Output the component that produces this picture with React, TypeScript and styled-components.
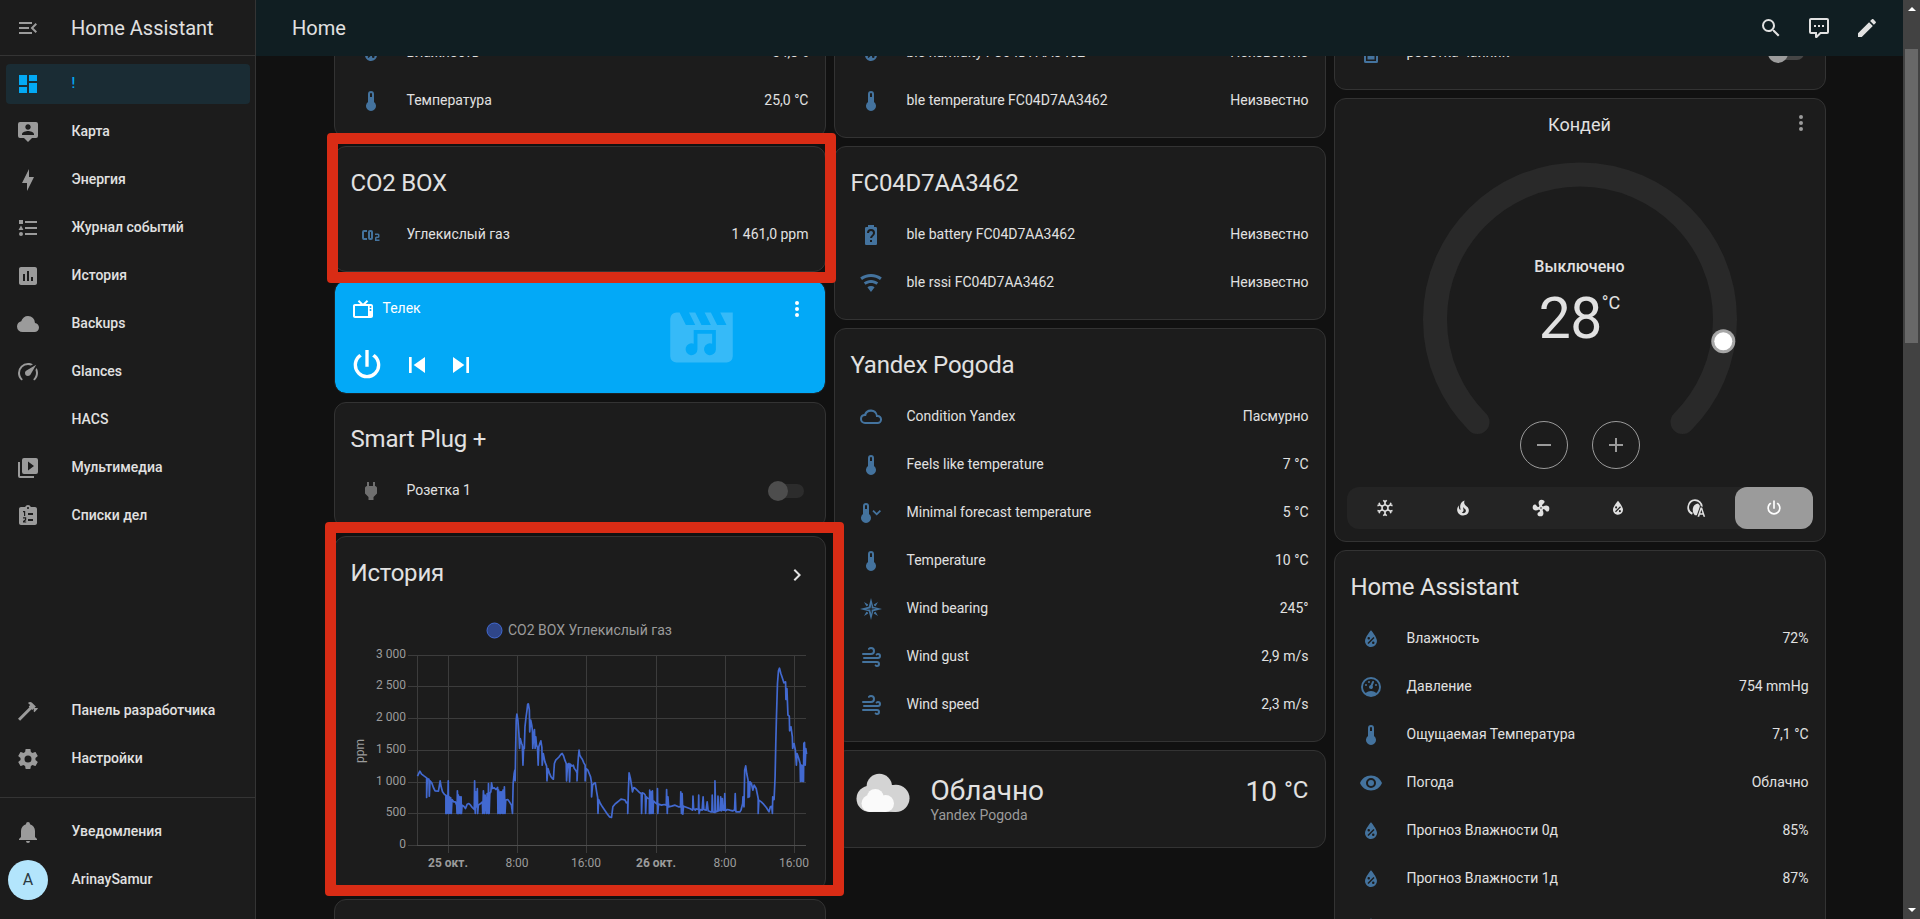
import React from "react";
import styled, { createGlobalStyle } from "styled-components";

const GlobalStyle = createGlobalStyle`
  * { box-sizing: border-box; }
  body {
    margin: 0;
    background: #111111;
    color: #e1e1e1;
    font-family: Roboto, "Noto Sans", sans-serif;
    font-size: 14px;
    line-height: 20px;
    overflow: hidden;
  }
`;

/* ---------- icons ---------- */

const icons = {
  menuOpen:
    "M21,15.61L19.59,17L14.58,12L19.59,7L21,8.39L17.44,12L21,15.61M3,6H16V8H3V6M3,13V11H13V13H3M3,18V16H16V18H3Z",
  dashboard: "M13,3V9H21V3M13,21H21V11H13M3,21H11V15H3M3,13H11V3H3V13Z",
  map: "M20,2H4A2,2 0 0,0 2,4V16A2,2 0 0,0 4,18H8L12,22L16,18H20A2,2 0 0,0 22,16V4A2,2 0 0,0 20,2M12,4.3C13.5,4.3 14.7,5.5 14.7,7C14.7,8.5 13.5,9.7 12,9.7C10.5,9.7 9.3,8.5 9.3,7C9.3,5.5 10.5,4.3 12,4.3M18,15H6V14.1C6,12.1 10,11 12,11C14,11 18,12.1 18,14.1V15Z",
  bolt: "M11 15H6L13 1V9H18L11 23V15Z",
  list: "M5,9.5L7.5,14H2.5L5,9.5M3,4H7V8H3V4M5,20A2,2 0 0,0 7,18A2,2 0 0,0 5,16A2,2 0 0,0 3,18A2,2 0 0,0 5,20M9,5V7H21V5H9M9,19H21V17H9V19M9,13H21V11H9V13Z",
  chartBox:
    "M9 17H7V10H9V17M13 17H11V7H13V17M17 17H15V13H17V17M19 3H5C3.9 3 3 3.9 3 5V19C3 20.1 3.9 21 5 21H19C20.1 21 21 20.1 21 19V5C21 3.9 20.1 3 19 3Z",
  cloud:
    "M6.5 20Q4.22 20 2.61 18.43 1 16.85 1 14.58 1 12.63 2.17 11.1 3.35 9.57 5.25 9.15 5.88 6.85 7.75 5.43 9.63 4 12 4 14.93 4 16.96 6.04 19 8.07 19 11 20.73 11.2 21.86 12.5 23 13.78 23 15.5 23 17.38 21.69 18.69 20.38 20 18.5 20Z",
  speedometer:
    "M12,16A3,3 0 0,1 9,13C9,11.88 9.61,10.9 10.5,10.39L20.21,4.77L14.68,14.35C14.18,15.33 13.17,16 12,16M12,3C13.81,3 15.5,3.5 16.97,4.32L14.87,5.53C14,5.19 13,5 12,5A8,8 0 0,0 4,13C4,15.21 4.89,17.21 6.34,18.65H6.35C6.74,19.04 6.74,19.67 6.35,20.06C5.96,20.45 5.32,20.45 4.93,20.07V20.07C3.12,18.26 2,15.76 2,13A10,10 0 0,1 12,3M22,13C22,15.76 20.88,18.26 19.07,20.07V20.07C18.68,20.45 18.05,20.45 17.66,20.06C17.27,19.67 17.27,19.04 17.66,18.65V18.65C19.11,17.2 20,15.21 20,13C20,12 19.81,11 19.46,10.1L20.67,8C21.5,9.5 22,11.18 22,13Z",
  media:
    "M4,6H2V20A2,2 0 0,0 4,22H18V20H4V6M20,2H8A2,2 0 0,0 6,4V16A2,2 0 0,0 8,18H20A2,2 0 0,0 22,16V4A2,2 0 0,0 20,2M12,14.5V5.5L18,10L12,14.5Z",
  clipboard:
    "M19 3H14.82C14.4 1.84 13.3 1 12 1S9.6 1.84 9.18 3H5C3.9 3 3 3.9 3 5V19C3 20.1 3.9 21 5 21H19C20.1 21 21 20.1 21 19V5C21 3.9 20.1 3 19 3M12 3C12.55 3 13 3.45 13 4S12.55 5 12 5 11 4.55 11 4 11.45 3 12 3M7 7H9.2V12H8V8.2H7ZM7 13.3H10.2V16L8.6 17.4H10.2V18.6H7V17.1L9 15.4V14.5H7ZM12 9H17V11H12ZM12 15H17V17H12Z",
  hammer:
    "M2 19.63L13.43 8.2L12.72 7.5L14.14 6.07L12 3.89C13.2 2.7 15.09 2.7 16.27 3.89L19.87 7.5L18.45 8.91H21.29L22 9.62L18.45 13.21L17.74 12.5V9.62L16.27 11.04L15.56 10.33L4.13 21.76L2 19.63Z",
  cog: "M12,15.5A3.5,3.5 0 0,1 8.5,12A3.5,3.5 0 0,1 12,8.5A3.5,3.5 0 0,1 15.5,12A3.5,3.5 0 0,1 12,15.5M19.43,12.97C19.47,12.65 19.5,12.33 19.5,12C19.5,11.67 19.47,11.34 19.43,11L21.54,9.37C21.73,9.22 21.78,8.95 21.66,8.73L19.66,5.27C19.54,5.05 19.27,4.96 19.05,5.05L16.56,6.05C16.04,5.66 15.5,5.32 14.87,5.07L14.5,2.42C14.46,2.18 14.25,2 14,2H10C9.75,2 9.54,2.18 9.5,2.42L9.13,5.07C8.5,5.32 7.96,5.66 7.44,6.05L4.95,5.05C4.73,4.96 4.46,5.05 4.34,5.27L2.34,8.73C2.21,8.95 2.27,9.22 2.46,9.37L4.57,11C4.53,11.34 4.5,11.67 4.5,12C4.5,12.33 4.53,12.65 4.57,12.97L2.46,14.63C2.27,14.78 2.21,15.05 2.34,15.27L4.34,18.73C4.46,18.95 4.73,19.03 4.95,18.95L7.44,17.94C7.96,18.34 8.5,18.68 9.13,18.93L9.5,21.58C9.54,21.82 9.75,22 10,22H14C14.25,22 14.46,21.82 14.5,21.58L14.87,18.93C15.5,18.67 16.04,18.34 16.56,17.94L19.05,18.95C19.27,19.03 19.54,18.95 19.66,18.73L21.66,15.27C21.78,15.05 21.73,14.78 21.54,14.63L19.43,12.97Z",
  bell: "M21,19V20H3V19L5,17V11C5,7.9 7.03,5.17 10,4.29C10,4.19 10,4.1 10,4A2,2 0 0,1 12,2A2,2 0 0,1 14,4C14,4.1 14,4.19 14,4.29C16.97,5.17 19,7.9 19,11V17L21,19M14,21A2,2 0 0,1 12,23A2,2 0 0,1 10,21",
  magnify:
    "M9.5,3A6.5,6.5 0 0,1 16,9.5C16,11.11 15.41,12.59 14.44,13.73L14.71,14H15.5L20.5,19L19,20.5L14,15.5V14.71L13.73,14.44C12.59,15.41 11.11,16 9.5,16A6.5,6.5 0 0,1 3,9.5A6.5,6.5 0 0,1 9.5,3M9.5,5C7,5 5,7 5,9.5C5,12 7,14 9.5,14C12,14 14,12 14,9.5C14,7 12,5 9.5,5Z",
  comment:
    "M9,22A1,1 0 0,1 8,21V18H4A2,2 0 0,1 2,16V4C2,2.89 2.9,2 4,2H20A2,2 0 0,1 22,4V16A2,2 0 0,1 20,18H13.9L10.2,21.71C10,21.9 9.75,22 9.5,22V22H9M10,16V19.08L13.08,16H20V4H4V16H10M17,11H15V9H17V11M13,11H11V9H13V11M9,11H7V9H9V11Z",
  pencil:
    "M20.71,7.04C21.1,6.65 21.1,6 20.71,5.63L18.37,3.29C18,2.9 17.35,2.9 16.96,3.29L15.12,5.12L18.87,8.87M3,17.25V21H6.75L17.81,9.93L14.06,6.18L3,17.25Z",
  thermometer:
    "M15 13V5A3 3 0 0 0 9 5V13A5 5 0 1 0 15 13M12 4A1 1 0 0 1 13 5V8H11V5A1 1 0 0 1 12 4Z",
  thermometerDown:
    "M10 13V5A3 3 0 0 0 4 5V13A5 5 0 1 0 10 13M7 4A1 1 0 0 1 8 5V8H6V5A1 1 0 0 1 7 4M14.6 9L13.4 10.3L17.7 14.4L22 10.3L20.8 9L17.7 11.9L14.6 9Z",
  humidity:
    "M12,3.25C12,3.25 6,10 6,14C6,17.32 8.69,20 12,20A6,6 0 0,0 18,14C18,10 12,3.25 12,3.25M14.47,9.97L15.53,11.03L9.53,17.03L8.47,15.97M9.75,10A1.25,1.25 0 0,1 11,11.25A1.25,1.25 0 0,1 9.75,12.5A1.25,1.25 0 0,1 8.5,11.25A1.25,1.25 0 0,1 9.75,10M14.25,14.5A1.25,1.25 0 0,1 15.5,15.75A1.25,1.25 0 0,1 14.25,17A1.25,1.25 0 0,1 13,15.75A1.25,1.25 0 0,1 14.25,14.5Z",
  co2: "M5,7A2,2 0 0,0 3,9V15A2,2 0 0,0 5,17H8V15H5V9H8V7H5M11 7A2 2 0 0 0 9 9V15A2 2 0 0 0 11 17H12A2 2 0 0 0 14 15V9A2 2 0 0 0 12 7H11M11,9H12V15H11V9M16,10.5V12H19V13.5H17.5A1.5,1.5 0 0 0 16,15V18H20.5V16.5H17.5V15H19A1.5,1.5 0 0 0 20.5,13.5V12A1.5,1.5 0 0 0 19,10.5H16Z",
  tv: "M8.16,3L6.75,4.41L9.34,7H4C2.89,7 2,7.89 2,9V19C2,20.11 2.89,21 4,21H20C21.11,21 22,20.11 22,19V9C22,7.89 21.11,7 20,7H14.66L17.25,4.41L15.84,3L12,6.84L8.16,3M4,9H17V19H4V9M19.5,9A1,1 0 0,1 20.5,10A1,1 0 0,1 19.5,11A1,1 0 0,1 18.5,10A1,1 0 0,1 19.5,9M19.5,12A1,1 0 0,1 20.5,13A1,1 0 0,1 19.5,14A1,1 0 0,1 18.5,13A1,1 0 0,1 19.5,12Z",
  power:
    "M16.56,5.44L15.11,6.89C16.84,7.94 18,9.83 18,12A6,6 0 0,1 12,18A6,6 0 0,1 6,12C6,9.83 7.16,7.94 8.88,6.88L7.44,5.44C5.36,6.88 4,9.28 4,12A8,8 0 0,0 12,20A8,8 0 0,0 20,12C20,9.28 18.64,6.88 16.56,5.44M13,3H11V13H13",
  skipPrevious: "M6,18V6H8V18H6M9.5,12L18,6V18L9.5,12Z",
  skipNext: "M16,18H18V6H16M6,18L14.5,12L6,6V18Z",
  dots: "M12,16A2,2 0 0,1 14,18A2,2 0 0,1 12,20A2,2 0 0,1 10,18A2,2 0 0,1 12,16M12,10A2,2 0 0,1 14,12A2,2 0 0,1 12,14A2,2 0 0,1 10,12A2,2 0 0,1 12,10M12,4A2,2 0 0,1 14,6A2,2 0 0,1 12,8A2,2 0 0,1 10,6A2,2 0 0,1 12,4Z",
  plug: "M16,7V3H14V7H10V3H8V7H8C7,7 6,8 6,9V14.5L9.5,18V21H14.5V18L18,14.5V9C18,8 17,7 16,7Z",
  chevron: "M8.59,16.58L13.17,12L8.59,7.41L10,6L16,12L10,18L8.59,16.58Z",
  battery:
    "M15.07,12.25L14.17,13.17C13.63,13.71 13.25,14.18 13.09,15H11.05C11.16,14.1 11.56,13.28 12.17,12.67L13.41,11.41C13.78,11.05 14,10.55 14,10C14,8.89 13.1,8 12,8A2,2 0 0,0 10,10H8A4,4 0 0,1 12,6A4,4 0 0,1 16,10C16,10.88 15.64,11.68 15.07,12.25M13,19H11V17H13M16.67,4H15V2H9V4H7.33A1.33,1.33 0 0,0 6,5.33V20.66C6,21.4 6.6,22 7.33,22H16.67C17.4,22 18,21.4 18,20.66V5.33C18,4.59 17.4,4 16.67,4Z",
  wifi: "M12,21L15.6,16.2C14.6,15.45 13.35,15 12,15C10.65,15 9.4,15.45 8.4,16.2L12,21M12,3C7.95,3 4.21,4.34 1.2,6.6L3,9C5.5,7.12 8.62,6 12,6C15.38,6 18.5,7.12 21,9L22.8,6.6C19.79,4.34 16.05,3 12,3M12,9C9.3,9 6.81,9.89 4.8,11.4L6.6,13.8C8.1,12.67 9.97,12 12,12C14.03,12 15.9,12.67 17.4,13.8L19.2,11.4C17.19,9.89 14.7,9 12,9Z",
  cloudOutline:
    "M6 19A5 5 0 0 1 1 14A5 5 0 0 1 5.2 9.1A7 7 0 0 1 18.6 10A4.5 4.5 0 0 1 18.5 19ZM6 17H18.5A2.5 2.5 0 0 0 18.5 12H17V11.3A5 5 0 0 0 7.1 11H6A3 3 0 0 0 6 17Z",
  compass:
    "M12 1L14.3 9.7L23 12L14.3 14.3L12 23L9.7 14.3L1 12L9.7 9.7ZM12.6 7V11.4H17L13.8 12.6H12.6V17L11.4 13.8V12.6H7L10.2 11.4H11.4ZM5 5L9.2 7.4L8.7 8.7L7.4 9.2ZM19 5L16.6 9.2L15.3 8.7L14.8 7.4ZM19 19L14.8 16.6L15.3 15.3L16.6 14.8ZM5 19L7.4 14.8L8.7 15.3L9.2 16.6Z",
  wind: "M4,10A1,1 0 0,1 3,9A1,1 0 0,1 4,8H12A2,2 0 0,0 14,6A2,2 0 0,0 12,4C11.45,4 10.95,4.22 10.59,4.59C10.2,5 9.56,5 9.17,4.59C8.78,4.2 8.78,3.56 9.17,3.17C9.9,2.45 10.9,2 12,2A4,4 0 0,1 16,6A4,4 0 0,1 12,10H4M19,12A1,1 0 0,0 20,11A1,1 0 0,0 19,10C18.72,10 18.47,10.11 18.29,10.29C17.9,10.68 17.27,10.68 16.88,10.29C16.5,9.9 16.5,9.27 16.88,8.88C17.42,8.34 18.17,8 19,8A3,3 0 0,1 22,11A3,3 0 0,1 19,14H5A1,1 0 0,1 4,13A1,1 0 0,1 5,12H19M18,18H4A1,1 0 0,1 3,17A1,1 0 0,1 4,16H18A3,3 0 0,1 21,19A3,3 0 0,1 18,22C17.17,22 16.42,21.66 15.88,21.12C15.5,20.73 15.5,20.1 15.88,19.71C16.27,19.32 16.9,19.32 17.29,19.71C17.47,19.89 17.72,20 18,20A1,1 0 0,0 19,19A1,1 0 0,0 18,18Z",
  gauge:
    "M12,2A10,10 0 0,0 2,12A10,10 0 0,0 12,22A10,10 0 0,0 22,12A10,10 0 0,0 12,2M12,4A8,8 0 0,1 20,12C20,14.4 19,16.5 17.3,18C15.9,16.7 14,16 12,16C10,16 8.2,16.7 6.7,18C5,16.5 4,14.4 4,12A8,8 0 0,1 12,4M14,5.89C13.62,5.9 13.26,6.15 13.1,6.54L11.81,9.77L11.71,10C11,10.13 10.41,10.6 10.14,11.26C9.73,12.29 10.23,13.45 11.26,13.86C12.29,14.27 13.45,13.77 13.86,12.74C14.12,12.08 14,11.32 13.57,10.76L13.67,10.5L14.96,7.29L14.97,7.26C15.17,6.75 14.92,6.17 14.41,5.96C14.28,5.91 14.15,5.89 14,5.89M10,6A1,1 0 0,0 9,7A1,1 0 0,0 10,8A1,1 0 0,0 11,7A1,1 0 0,0 10,6M7,9A1,1 0 0,0 6,10A1,1 0 0,0 7,11A1,1 0 0,0 8,10A1,1 0 0,0 7,9M17,9A1,1 0 0,0 16,10A1,1 0 0,0 17,11A1,1 0 0,0 18,10A1,1 0 0,0 17,9Z",
  eye: "M12,9A3,3 0 0,0 9,12A3,3 0 0,0 12,15A3,3 0 0,0 15,12A3,3 0 0,0 12,9M12,17A5,5 0 0,1 7,12A5,5 0 0,1 12,7A5,5 0 0,1 17,12A5,5 0 0,1 12,17M12,4.5C7,4.5 2.73,7.61 1,12C2.73,16.39 7,19.5 12,19.5C17,19.5 21.27,16.39 23,12C21.27,7.61 17,4.5 12,4.5Z",
  kettle:
    "M6.5 2H17.5A1.5 1.5 0 0 1 19 3.5V20.5A1.5 1.5 0 0 1 17.5 22H6.5A1.5 1.5 0 0 1 5 20.5V3.5A1.5 1.5 0 0 1 6.5 2ZM7 11V20H17V11ZM8.5 14H15.5V18.5H8.5Z",
  snowflake:
    "M20.79,13.95L18.46,14.57L16.46,13.44V10.56L18.46,9.43L20.79,10.05L21.31,8.12L19.54,7.65L20,5.88L18.07,5.36L17.45,7.69L15.45,8.82L13,7.38V5.12L14.71,3.41L13.29,2L12,3.29L10.71,2L9.29,3.41L11,5.12V7.38L8.5,8.82L6.5,7.69L5.92,5.36L4,5.88L4.47,7.65L2.7,8.12L3.22,10.05L5.55,9.43L7.55,10.56V13.45L5.55,14.58L3.22,13.96L2.7,15.89L4.47,16.36L4,18.12L5.93,18.64L6.55,16.31L8.55,15.18L11,16.62V18.88L9.29,20.59L10.71,22L12,20.71L13.29,22L14.7,20.59L13,18.88V16.62L15.5,15.17L17.5,16.3L18.12,18.63L20,18.12L19.53,16.35L21.3,15.88L20.79,13.95M9.5,10.56L12,9.11L14.5,10.56V13.44L12,14.89L9.5,13.44V10.56Z",
  fire: "M17.66 11.2C17.43 10.9 17.15 10.64 16.89 10.38C16.22 9.78 15.46 9.35 14.82 8.72C13.33 7.26 13 4.85 13.95 3C13 3.23 12.17 3.75 11.46 4.32C8.87 6.4 7.85 10.07 9.07 13.22C9.11 13.32 9.15 13.42 9.15 13.55C9.15 13.77 9 13.97 8.8 14.05C8.57 14.15 8.33 14.09 8.14 13.93C8.08 13.88 8.04 13.83 8 13.76C6.87 12.33 6.69 10.28 7.45 8.64C5.78 10 4.87 12.3 5 14.47C5.06 14.97 5.12 15.47 5.29 15.97C5.43 16.57 5.7 17.17 6 17.7C7.08 19.43 8.95 20.67 10.96 20.92C13.1 21.19 15.39 20.8 17.03 19.32C18.86 17.66 19.5 15 18.56 12.72L18.43 12.46C18.22 12 17.66 11.2 17.66 11.2M14.5 17.5C14.22 17.74 13.76 18 13.4 18.1C12.28 18.5 11.16 17.94 10.5 17.28C11.69 17 12.4 16.12 12.61 15.23C12.78 14.43 12.46 13.77 12.33 13C12.21 12.26 12.23 11.63 12.5 10.94C12.69 11.32 12.89 11.7 13.13 12C13.9 13 15.11 13.44 15.37 14.8C15.41 14.94 15.43 15.08 15.43 15.23C15.46 16.05 15.1 16.95 14.5 17.5H14.5Z",
  fan: "M12,11A1,1 0 0,0 11,12A1,1 0 0,0 12,13A1,1 0 0,0 13,12A1,1 0 0,0 12,11M12.5,2C17,2 17.11,5.57 14.75,6.75C13.76,7.24 13.32,8.29 13.13,9.22C13.61,9.42 14.03,9.73 14.35,10.13C18.05,8.13 22.03,8.92 22.03,12.5C22.03,17 18.46,17.1 17.28,14.73C16.78,13.74 15.72,13.3 14.79,13.11C14.59,13.59 14.28,14 13.88,14.34C15.87,18.03 15.08,22 11.5,22C7,22 6.91,18.42 9.27,17.24C10.25,16.75 10.69,15.71 10.89,14.79C10.4,14.59 9.97,14.27 9.65,13.87C5.96,15.85 2,15.07 2,11.5C2,7 5.56,6.89 6.74,9.26C7.24,10.25 8.29,10.68 9.22,10.87C9.41,10.39 9.73,9.97 10.14,9.65C8.15,5.96 8.94,2 12.5,2Z",
  auto: "M10.8 1.6A9.4 9.4 0 0 1 20.2 10.5L17.7 9.8A7 7 0 0 0 6.2 5.4A7.4 7.4 0 0 0 8.2 17.8L7.2 20.2A9.8 9.8 0 0 1 10.8 1.6ZM14.4 6.6L16.4 8.6L16.6 10.5L13 20.8H10.6C8.6 18.2 7.8 15.4 8.2 12.6C8.8 9.2 11.2 7 14.4 6.6ZM17.4 11.5H19.4L23 22.5H21L20.3 20H16.6L15.9 22.5H13.8ZM18.4 14L17.2 18.2H19.7Z",
  minus: "M19,13H5V11H19V13Z",
  plus: "M19,13H13V19H11V13H5V11H11V5H13V11H19V13Z",
  mediaArt:
    "M18,4L20,8H17L15,4H13L15,8H12L10,4H8L10,8H7L5,4H4A2,2 0 0,0 2,6V18A2,2 0 0,0 4,20H20A2,2 0 0,0 22,18V4H18M9.5 9.6H16.6V15.8A1.9 1.9 0 1 1 15.4 14V10.8H10.7V15.8A1.9 1.9 0 1 1 9.5 14Z",
};
type IconName = keyof typeof icons;

const Svg = styled.svg<{ $size: number }>`
  display: block;
  flex: none;
  width: ${(p) => p.$size}px;
  height: ${(p) => p.$size}px;
  fill: currentColor;
`;

const Icon = ({ name, size = 24 }: { name: IconName; size?: number }) => (
  <Svg $size={size} viewBox="0 0 24 24">
    <path d={icons[name]} fillRule="evenodd" />
  </Svg>
);

/* ---------- page frame ---------- */

const Page = styled.div`
  position: relative;
  display: flex;
  width: 1920px;
  height: 919px;
  overflow: hidden;
`;

const Sidebar = styled.nav`
  display: flex;
  flex-direction: column;
  flex: none;
  width: 256px;
  background: #1c1c1c;
  border-right: 1px solid #343434;
`;

const SidebarHeader = styled.div`
  display: flex;
  align-items: center;
  gap: 31px;
  height: 56px;
  padding-left: 16px;
  border-bottom: 1px solid #343434;
  color: #9b9b9b;
`;

const SidebarTitle = styled.span`
  color: #e1e1e1;
  font-size: 20px;
`;

const NavList = styled.div<{ $grow?: boolean }>`
  display: flex;
  flex-direction: column;
  gap: 8px;
  padding: 8px 5px 0 6px;
  flex: ${(p) => (p.$grow ? 1 : "none")};
`;

const NavItem = styled.a<{ $active?: boolean }>`
  display: flex;
  align-items: center;
  height: 40px;
  border-radius: 4px;
  background: ${(p) => (p.$active ? "#1a2c34" : "transparent")};
  color: ${(p) => (p.$active ? "#03a9f4" : "#9b9b9b")};
`;

const NavIcon = styled.span`
  display: flex;
  justify-content: center;
  width: 44px;
  flex: none;
`;

const NavLabel = styled.span<{ $active?: boolean }>`
  margin: 0 0 2px 21.5px;
  color: ${(p) => (p.$active ? "#03a9f4" : "#e1e1e1")};
  font-weight: 500;
`;

const NavBottom = styled(NavList)`
  padding-bottom: 18px;
`;

const UserArea = styled(NavList)`
  height: 122px;
  padding-top: 14px;
  border-top: 1px solid #343434;
`;

const Avatar = styled.span`
  display: flex;
  align-items: center;
  justify-content: center;
  width: 40px;
  height: 40px;
  border-radius: 50%;
  background: #b3e5fc;
  color: #2b3a41;
  font-size: 16px;
`;

const Main = styled.main`
  display: flex;
  flex-direction: column;
  width: 1647px;
`;

const Toolbar = styled.header`
  display: flex;
  align-items: center;
  flex: none;
  height: 56px;
  padding: 0 12px 0 36px;
  background: #101e22;
`;

const ToolbarTitle = styled.h1`
  flex: 1;
  margin: 0;
  font-size: 20px;
  font-weight: 400;
`;

const ToolbarButton = styled.button`
  display: flex;
  align-items: center;
  justify-content: center;
  width: 48px;
  height: 48px;
  padding: 0;
  border: 0;
  background: none;
  color: #e1e1e1;
`;

const Content = styled.div`
  display: flex;
  justify-content: center;
  align-items: flex-start;
  flex: 1;
  min-height: 0;
  overflow: hidden;
`;

const Column = styled.div`
  display: flex;
  flex-direction: column;
  gap: 8px;
  width: 500px;
  margin-top: -40px;
  padding: 0 4px;
`;

const ScrollBar = styled.div`
  display: flex;
  flex-direction: column;
  align-items: center;
  flex: none;
  width: 17px;
  padding: 7px 0;
  background: #424242;
`;

const ScrollArrow = styled.span<{ $down?: boolean }>`
  border: 4px solid transparent;
  border-top: ${(p) => (p.$down ? "4px solid #fff" : "0")};
  border-bottom: ${(p) => (p.$down ? "0" : "4px solid #fff")};
`;

const ScrollTrack = styled.div`
  flex: 1;
  width: 13px;
  padding-top: 38px;
`;

const ScrollThumb = styled.div`
  height: 294px;
  background: #686868;
`;

/* ---------- cards ---------- */

const Card = styled.section<{ $height?: number }>`
  flex: none;
  height: ${(p) => (p.$height ? `${p.$height}px` : "auto")};
  background: #1c1c1c;
  border: 1px solid #333333;
  border-radius: 12px;
`;

const CardHeader = styled.div`
  display: flex;
  justify-content: space-between;
  padding: 12px 16px 16px;
  font-size: 24px;
  line-height: 48px;
  letter-spacing: -0.2px;
  align-items: center;
`;

const HeaderLink = styled.span`
  padding-top: 3px;
`;

const Rows = styled.div<{ $headed: boolean }>`
  display: flex;
  flex-direction: column;
  gap: 8px;
  margin-top: ${(p) => (p.$headed ? "-8px" : "0")};
  padding: ${(p) => (p.$headed ? "0 16px 16px" : "16px")};
`;

const Row = styled.div`
  display: flex;
  align-items: center;
  height: 40px;
`;

const StateIcon = styled.span<{ $off?: boolean }>`
  display: flex;
  justify-content: center;
  width: 40px;
  color: ${(p) => (p.$off ? "#6f6f6f" : "#44739e")};
`;

const RowName = styled.span`
  flex: 1;
  margin: 0 0 2px 16px;
`;

const RowValue = styled.span`
  margin-bottom: 2px;
`;

const Toggle = styled.span<{ $light?: boolean }>`
  display: flex;
  align-items: center;
  width: 36px;
  height: 14px;
  margin-right: 5px;
  border-radius: 7px;
  background: ${(p) => (p.$light ? "#454545" : "#2c2c2c")};
  &::before {
    content: "";
    width: 20px;
    height: 20px;
    border-radius: 50%;
    background: ${(p) => (p.$light ? "#9c9c9c" : "#4d4d4d")};
  }
`;

interface Entity {
  icon: IconName;
  name: string;
  value?: string;
  off?: boolean;
  light?: boolean;
}

const EntitiesCard = ({ title, rows }: { title?: string; rows: Entity[] }) => (
  <Card>
    {title && <CardHeader>{title}</CardHeader>}
    <Rows $headed={!!title}>
      {rows.map((r) => (
        <Row key={r.name}>
          <StateIcon $off={r.off}>
            <Icon name={r.icon} />
          </StateIcon>
          <RowName>{r.name}</RowName>
          {r.value ? <RowValue>{r.value}</RowValue> : <Toggle $light={r.light} />}
        </Row>
      ))}
    </Rows>
  </Card>
);

/* ---------- media player ---------- */

const MediaCard = styled(Card)`
  position: relative;
  display: flex;
  flex-direction: column;
  padding: 16px 16px 0;
  border-color: #1b2327;
  background: #03a9f7 padding-box;
  color: #fff;
`;

const MediaTop = styled.div`
  display: flex;
  align-items: center;
  height: 24px;
`;

const MediaName = styled.span`
  flex: 1;
  margin: 0 0 2px 8px;
`;

const MediaControls = styled.div`
  display: flex;
  align-items: center;
  height: 40px;
  margin: 24px 0 0 -4px;
  gap: 12px;
`;

const PowerSlot = styled.span`
  margin-right: 2px;
`;

const MediaArtwork = styled.div`
  position: absolute;
  top: 19px;
  left: 329.5px;
  opacity: 0.2;
`;

/* ---------- history ---------- */

const HistoryBody = styled.div`
  padding: 0 16px 0 15.5px;
`;

const ChartSvg = styled.svg`
  display: block;
  width: 458px;
  height: 270px;
  overflow: visible;
  font-size: 12px;
  fill: #9b9b9b;
`;

/* CO2 trace: horizontal offset 0-1151, level 0-570 for 0-3000 ppm */
const trace =
  "0,208 7,223 12,214 20,208 27,203 27,144 29,201 34,199 35,148 37,194 42,188 47,174 52,164 62,163 67,194 70,176 74,161 80,153 84,151 84,96 86,150 87,96 90,148 91,194 92,96 94,146 96,96 98,144 100,96 102,138 107,131 112,131 116,121 117,96 118,164 120,96 121,151 123,96 125,146 127,96 129,146 130,96 132,121 137,118 142,111 147,124 152,126 157,121 162,114 168,108 169,194 170,116 171,96 173,161 175,116 177,171 178,96 180,121 187,126 192,131 193,96 195,164 197,131 198,96 200,151 201,141 204,96 206,156 209,96 210,186 212,96 214,156 217,161 219,188 222,171 227,173 232,168 237,174 238,96 240,166 242,96 245,161 246,96 249,161 251,96 253,166 255,96 257,176 259,96 261,136 267,138 272,131 278,121 281,96 283,186 286,216 288,226 289,194 290,266 292,376 294,394 297,376 300,336 302,291 304,321 308,306 310,301 312,241 314,296 316,291 318,356 321,384 324,406 326,424 328,425 331,406 332,341 335,376 338,361 340,344 341,291 344,331 346,348 348,291 350,326 352,301 355,294 357,241 359,296 362,306 365,314 368,294 369,241 372,276 377,251 382,238 383,194 386,231 390,218 395,206 399,201 402,199 405,246 409,256 414,261 419,266 424,273 428,276 432,269 436,256 440,246 441,194 444,244 448,246 450,191 452,244 457,238 461,241 464,231 468,226 472,218 472,194 474,236 476,266 478,286 480,271 484,264 488,258 492,248 496,241 496,194 499,231 504,226 508,216 512,206 515,188 515,146 518,181 522,186 526,188 530,161 533,144 534,96 536,138 541,126 547,116 554,106 562,94 568,86 574,84 578,116 584,124 590,129 596,134 602,139 608,138 614,136 618,128 622,131 622,96 624,166 626,218 630,201 634,176 636,161 640,174 646,170 652,164 658,158 662,156 663,96 665,158 670,156 674,151 675,96 677,146 682,141 686,141 686,96 687,166 689,96 691,161 693,96 695,164 697,96 698,134 704,128 709,124 710,171 711,96 713,124 722,121 730,123 736,121 737,168 739,96 741,146 743,116 752,118 762,121 772,116 778,116 779,161 781,96 783,156 785,94 787,118 797,114 807,110 814,106 815,148 817,111 822,106 824,110 831,108 832,151 833,96 836,108 842,106 845,146 847,108 854,106 857,131 860,104 867,101 871,101 872,151 874,101 880,99 880,194 882,101 888,103 889,148 891,104 896,106 897,146 899,104 902,141 904,106 908,106 909,156 911,104 917,108 924,106 932,104 938,106 940,156 942,101 950,101 954,101 957,106 962,126 963,146 966,116 968,226 971,239 974,216 978,196 978,144 980,191 982,146 984,191 988,186 992,166 996,181 1002,171 1005,156 1008,141 1008,96 1010,136 1017,131 1024,124 1032,114 1040,101 1044,116 1048,118 1050,96 1051,146 1055,138 1058,206 1060,306 1062,386 1065,486 1068,524 1071,532 1075,516 1080,501 1084,488 1089,491 1090,438 1093,471 1096,391 1100,388 1101,344 1105,356 1109,326 1110,291 1114,306 1118,286 1121,241 1123,276 1128,261 1132,246 1133,192 1136,241 1138,192 1141,241 1142,192 1143,306 1145,309 1147,241 1149,291 1151,274";

const PLOT = { left: 67.5, right: 456, bottom: 232.5 };
const points = trace
  .split(" ")
  .map((p) => {
    const [x, v] = p.split(",").map(Number);
    return `${(PLOT.left + x * 0.338).toFixed(2)},${(PLOT.bottom - v / 3).toFixed(2)}`;
  })
  .join(" ");

const yTicks: [string, number][] = [
  ["3 000", 42.5],
  ["2 500", 73.5],
  ["2 000", 105.5],
  ["1 500", 137.5],
  ["1 000", 169.5],
  ["500", 200.5],
  ["0", 232.5],
];
const xTicks: [string, number, boolean][] = [
  ["25 окт.", 98.5, true],
  ["8:00", 167.5, false],
  ["16:00", 236.5, false],
  ["26 окт.", 306.5, true],
  ["8:00", 375.5, false],
  ["16:00", 444.5, false],
];

const Chart = () => (
  <ChartSvg viewBox="0 0 458 270">
    <circle cx="144.5" cy="17.5" r="7.5" fill="#2f4688" stroke="#4269d0" />
    <text x="158" y="22" fontSize="14">
      CO2 BOX Углекислый газ
    </text>
    <path
      d={`${yTicks.map(([, y]) => `M58 ${y}H${PLOT.right}`).join("")}M67.5 42V233${xTicks
        .map(([, x]) => `M${x} 42V240`)
        .join("")}`}
      stroke="#3c3c3c"
      fill="none"
    />
    <path d="M67 232.5H456" stroke="#4e4e4e" />
    {yTicks.map(([label, y]) => (
      <text key={label} x="56" y={y + 2.5} textAnchor="end">
        {label}
      </text>
    ))}
    {xTicks.map(([label, x, bold]) => (
      <text key={x} x={x - 0.5} y="254" textAnchor="middle" fontWeight={bold ? 700 : 400}>
        {label}
      </text>
    ))}
    <text transform="translate(14 138) rotate(-90)" textAnchor="middle">
      ppm
    </text>
    <polyline points={points} fill="none" stroke="#4269d0" strokeWidth="1.7" strokeLinejoin="round" />
  </ChartSvg>
);

/* ---------- weather ---------- */

const WeatherCard = styled(Card)`
  display: flex;
  align-items: center;
  padding: 0 16px;
`;

const WeatherText = styled.div`
  flex: 1;
  margin: -2px 0 0 16px;
`;

const WeatherState = styled.div`
  font-size: 28px;
  line-height: 33px;
`;

const WeatherName = styled.div`
  color: #9b9b9b;
  line-height: 16px;
`;

const WeatherTemp = styled.div`
  display: flex;
  align-items: flex-start;
  margin-top: -16px;
  font-size: 28px;
  line-height: 33px;
`;

const WeatherUnit = styled.span`
  margin-left: 7px;
  font-size: 24px;
  line-height: 31px;
`;

const CloudSvg = styled.svg`
  display: block;
  width: 64px;
  height: 64px;
`;

const WeatherCloud = () => (
  <CloudSvg viewBox="0 0 64 64">
    <g fill="#d4d4d4">
      <circle cx="28.3" cy="19.4" r="12.7" />
      <circle cx="18.6" cy="31.8" r="13.1" />
      <circle cx="44.9" cy="31.3" r="13.6" />
      <path d="M18 18H45V44.9H18Z" />
    </g>
    <g fill="#fafafa">
      <circle cx="24.3" cy="30.2" r="8.3" />
      <circle cx="18.9" cy="36.5" r="8.4" />
      <circle cx="34.6" cy="36.5" r="8.4" />
      <path d="M19 30H34V44.9H19Z" />
    </g>
  </CloudSvg>
);

/* ---------- thermostat ---------- */

const ThermostatCard = styled(Card)`
  display: flex;
  flex-direction: column;
  padding: 0 12px;
`;

const ThermostatHeader = styled.div`
  display: grid;
  grid-template-columns: 24px 1fr 24px;
  align-items: center;
  height: 52px;
  font-size: 18px;
  text-align: center;
`;

const MoreButton = styled.span`
  display: block;
  padding-bottom: 4px;
  color: #9b9b9b;
`;

const Dial = styled.div`
  position: relative;
  width: 320px;
  height: 320px;
  margin: 8px auto 0;
`;

const DialSvg = styled.svg`
  display: block;
  width: 320px;
  height: 320px;
`;

const DialInfo = styled.div`
  position: absolute;
  inset: 0;
  display: flex;
  flex-direction: column;
  align-items: center;
  padding-top: 95.5px;
`;

const DialLabel = styled.div`
  font-size: 16px;
  line-height: 24px;
  font-weight: 500;
  letter-spacing: 0.1px;
`;

const DialValue = styled.div`
  display: flex;
  margin-top: 8px;
  font-size: 57px;
  line-height: 64px;
  letter-spacing: -0.6px;
`;

const DialUnit = styled.span`
  font-size: 18px;
  line-height: 32px;
  letter-spacing: 0;
`;

const DialButtons = styled.div`
  display: flex;
  gap: 24px;
  margin-top: 70px;
`;

const RoundButton = styled.button`
  display: flex;
  align-items: center;
  justify-content: center;
  width: 48px;
  height: 48px;
  padding: 0;
  border: 1px solid #9b9b9b;
  border-radius: 50%;
  background: none;
  color: #9b9b9b;
`;

const ModeBar = styled.div`
  display: flex;
  height: 42px;
  margin-top: 8px;
  border-radius: 12px;
  background: #242424;
`;

const Mode = styled.button<{ $active?: boolean }>`
  display: flex;
  flex: 1;
  align-items: center;
  justify-content: center;
  padding: 0;
  border: 0;
  border-radius: 12px;
  background: ${(p) => (p.$active ? "#9b9b9b" : "transparent")};
  color: ${(p) => (p.$active ? "#ffffff" : "#e1e1e1")};
`;

/* Red frames drawn over the dashboard */
const Highlight = styled.div<{ $x: number; $y: number; $w: number; $h: number }>`
  position: absolute;
  left: ${(p) => p.$x}px;
  top: ${(p) => p.$y}px;
  width: ${(p) => p.$w}px;
  height: ${(p) => p.$h}px;
  border: 11px solid #d92c15;
  border-radius: 4px;
`;

const nav: { icon?: IconName; label: string; active?: boolean }[] = [
  { icon: "dashboard", label: "!", active: true },
  { icon: "map", label: "Карта" },
  { icon: "bolt", label: "Энергия" },
  { icon: "list", label: "Журнал событий" },
  { icon: "chartBox", label: "История" },
  { icon: "cloud", label: "Backups" },
  { icon: "speedometer", label: "Glances" },
  { label: "HACS" },
  { icon: "media", label: "Мультимедиа" },
  { icon: "clipboard", label: "Списки дел" },
];

const NavEntry = ({ icon, label, active }: { icon?: IconName; label: string; active?: boolean }) => (
  <NavItem $active={active}>
    <NavIcon>{icon && <Icon name={icon} />}</NavIcon>
    <NavLabel $active={active}>{label}</NavLabel>
  </NavItem>
);

const modes: IconName[] = ["snowflake", "fire", "fan", "humidity", "auto", "power"];

export default function App() {
  return (
    <Page>
      <GlobalStyle />
      <Sidebar>
        <SidebarHeader>
          <Icon name="menuOpen" />
          <SidebarTitle>Home Assistant</SidebarTitle>
        </SidebarHeader>
        <NavList $grow>
          {nav.map((n) => (
            <NavEntry key={n.label} {...n} />
          ))}
        </NavList>
        <NavBottom>
          <NavEntry icon="hammer" label="Панель разработчика" />
          <NavEntry icon="cog" label="Настройки" />
        </NavBottom>
        <UserArea>
          <NavEntry icon="bell" label="Уведомления" />
          <NavItem>
            <NavIcon>
              <Avatar>A</Avatar>
            </NavIcon>
            <NavLabel>ArinaySamur</NavLabel>
          </NavItem>
        </UserArea>
      </Sidebar>
      <Main>
        <Toolbar>
          <ToolbarTitle>Home</ToolbarTitle>
          <ToolbarButton>
            <Icon name="magnify" />
          </ToolbarButton>
          <ToolbarButton>
            <Icon name="comment" />
          </ToolbarButton>
          <ToolbarButton>
            <Icon name="pencil" />
          </ToolbarButton>
        </Toolbar>
        <Content>
          <Column>
            <EntitiesCard
              rows={[
                { icon: "humidity", name: "Влажность", value: "54,8%" },
                { icon: "thermometer", name: "Температура", value: "25,0 °C" },
              ]}
            />
            <EntitiesCard
              title="CO2 BOX"
              rows={[{ icon: "co2", name: "Углекислый газ", value: "1 461,0 ppm" }]}
            />
            <MediaCard $height={114}>
              <MediaTop>
                <Icon name="tv" />
                <MediaName>Телек</MediaName>
                <Icon name="dots" />
              </MediaTop>
              <MediaControls>
                <PowerSlot>
                  <Icon name="power" size={40} />
                </PowerSlot>
                <Icon name="skipPrevious" size={32} />
                <Icon name="skipNext" size={32} />
              </MediaControls>
              <MediaArtwork>
                <Icon name="mediaArt" size={75} />
              </MediaArtwork>
            </MediaCard>
            <EntitiesCard title="Smart Plug +" rows={[{ icon: "plug", name: "Розетка 1", off: true }]} />
            <Card $height={355}>
              <CardHeader>
                История
                <HeaderLink>
                  <Icon name="chevron" />
                </HeaderLink>
              </CardHeader>
              <HistoryBody>
                <Chart />
              </HistoryBody>
            </Card>
            <Card $height={126} />
          </Column>
          <Column>
            <EntitiesCard
              rows={[
                { icon: "humidity", name: "ble humidity FC04D7AA3462", value: "Неизвестно" },
                { icon: "thermometer", name: "ble temperature FC04D7AA3462", value: "Неизвестно" },
              ]}
            />
            <EntitiesCard
              title="FC04D7AA3462"
              rows={[
                { icon: "battery", name: "ble battery FC04D7AA3462", value: "Неизвестно" },
                { icon: "wifi", name: "ble rssi FC04D7AA3462", value: "Неизвестно" },
              ]}
            />
            <EntitiesCard
              title="Yandex Pogoda"
              rows={[
                { icon: "cloudOutline", name: "Condition Yandex", value: "Пасмурно" },
                { icon: "thermometer", name: "Feels like temperature", value: "7 °C" },
                { icon: "thermometerDown", name: "Minimal forecast temperature", value: "5 °C" },
                { icon: "thermometer", name: "Temperature", value: "10 °C" },
                { icon: "compass", name: "Wind bearing", value: "245°" },
                { icon: "wind", name: "Wind gust", value: "2,9 m/s" },
                { icon: "wind", name: "Wind speed", value: "2,3 m/s" },
              ]}
            />
            <WeatherCard $height={98}>
              <WeatherCloud />
              <WeatherText>
                <WeatherState>Облачно</WeatherState>
                <WeatherName>Yandex Pogoda</WeatherName>
              </WeatherText>
              <WeatherTemp>
                10<WeatherUnit>°C</WeatherUnit>
              </WeatherTemp>
            </WeatherCard>
          </Column>
          <Column>
            <EntitiesCard rows={[{ icon: "kettle", name: "розетка чайник", light: true }]} />
            <ThermostatCard $height={444}>
              <ThermostatHeader>
                <span />
                <span>Кондей</span>
                <MoreButton>
                  <Icon name="dots" />
                </MoreButton>
              </ThermostatHeader>
              <Dial>
                <DialSvg viewBox="0 0 320 320">
                  <path
                    d="M57.5 263A145 145 0 1 1 262.5 263"
                    fill="none"
                    stroke="#292929"
                    strokeWidth="24"
                    strokeLinecap="round"
                  />
                  <circle cx="303.3" cy="182.3" r="12" fill="#a6a6a6" />
                  <circle cx="303.3" cy="182.3" r="9" fill="#ffffff" />
                </DialSvg>
                <DialInfo>
                  <DialLabel>Выключено</DialLabel>
                  <DialValue>
                    28<DialUnit>°C</DialUnit>
                  </DialValue>
                  <DialButtons>
                    <RoundButton>
                      <Icon name="minus" />
                    </RoundButton>
                    <RoundButton>
                      <Icon name="plus" />
                    </RoundButton>
                  </DialButtons>
                </DialInfo>
              </Dial>
              <ModeBar>
                {modes.map((m) => (
                  <Mode key={m} $active={m === "power"}>
                    <Icon name={m} size={20} />
                  </Mode>
                ))}
              </ModeBar>
            </ThermostatCard>
            <EntitiesCard
              title="Home Assistant"
              rows={[
                { icon: "humidity", name: "Влажность", value: "72%" },
                { icon: "gauge", name: "Давление", value: "754 mmHg" },
                { icon: "thermometer", name: "Ощущаемая Температура", value: "7,1 °C" },
                { icon: "eye", name: "Погода", value: "Облачно" },
                { icon: "humidity", name: "Прогноз Влажности 0д", value: "85%" },
                { icon: "humidity", name: "Прогноз Влажности 1д", value: "87%" },
                { icon: "humidity", name: "Прогноз Влажности 2д", value: "80%" },
              ]}
            />
          </Column>
        </Content>
      </Main>
      <ScrollBar>
        <ScrollArrow />
        <ScrollTrack>
          <ScrollThumb />
        </ScrollTrack>
        <ScrollArrow $down />
      </ScrollBar>
      <Highlight $x={327} $y={133} $w={509} $h={150} />
      <Highlight $x={325} $y={522} $w={519} $h={374} />
    </Page>
  );
}
